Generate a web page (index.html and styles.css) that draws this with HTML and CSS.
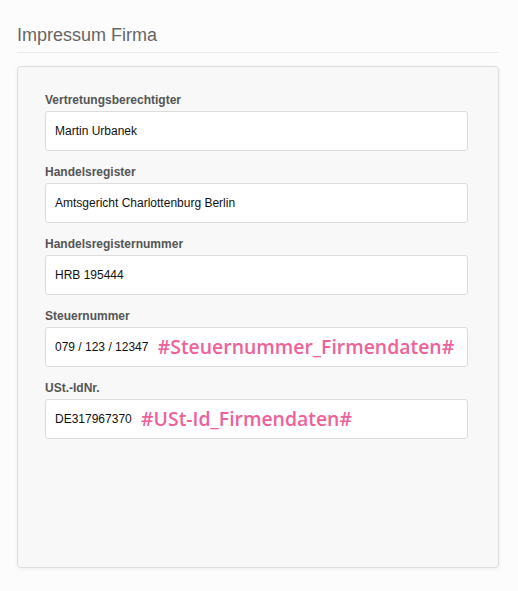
FILE: index.html
```
<html>
  <head>
    <title>Impressum Firma</title>
    <meta charset="utf-8" />
    <link rel="stylesheet" href="styles.css">
  </head>
  <body>
    <h3 class="section-title">Impressum Firma</h3>
    <div class="card">
      <div class="field">
        <label class="field-label">Vertretungsberechtigter</label>
        <div class="field-input">Martin Urbanek</div>
      </div>
      <div class="field">
        <label class="field-label">Handelsregister</label>
        <div class="field-input">Amtsgericht Charlottenburg Berlin</div>
      </div>
      <div class="field">
        <label class="field-label">Handelsregisternummer</label>
        <div class="field-input">HRB 195444</div>
      </div>
      <div class="field">
        <label class="field-label">Steuernummer</label>
        <div class="field-input">079 / 123 / 12347 <span class="placeholder">#Steuernummer_Firmendaten#</span></div>
      </div>
      <div class="field">
        <label class="field-label">USt.-IdNr.</label>
        <div class="field-input">DE317967370 <span class="placeholder">#USt-Id_Firmendaten#</span></div>
      </div>
    </div>
  </body>
</html>
```
FILE: styles.css
```
body {
  background:#fcfcfc;
  color:#222;
  font:12px/16px 'Liberation Sans', Arial, sans-serif;
  margin:0;
  padding:0 19px 0 17px;
}

.section-title {
  font:18px/22px 'Liberation Sans', Arial, sans-serif;
  color:#666;
  margin:0;
  padding:24px 0 6px;
  border-bottom:1px solid #ececec;
}

.card {
  background:#f8f8f8;
  border:1px solid #dedede;
  border-radius:4px;
  box-shadow:0 1px 4px rgba(0,0,0,0.06);
  margin-top:13px;
  height:475px;
  padding:25px 30px 0 27px;
}

.field {
  margin-bottom:13px;
}

.field-label {
  display:block;
  font-weight:bold;
  color:#555;
  line-height:16px;
  margin-bottom:3px;
}

.field-input {
  background:#fff;
  border:1px solid #dcdcdc;
  border-radius:3px;
  height:38px;
  line-height:38px;
  padding:0 9px;
  color:#111;
  white-space:nowrap;
}

.placeholder {
  font:600 19.4px/38px 'Open Sans', sans-serif;
  color:#ee6199;
  margin-left:6px;
  vertical-align:top;
}
```
